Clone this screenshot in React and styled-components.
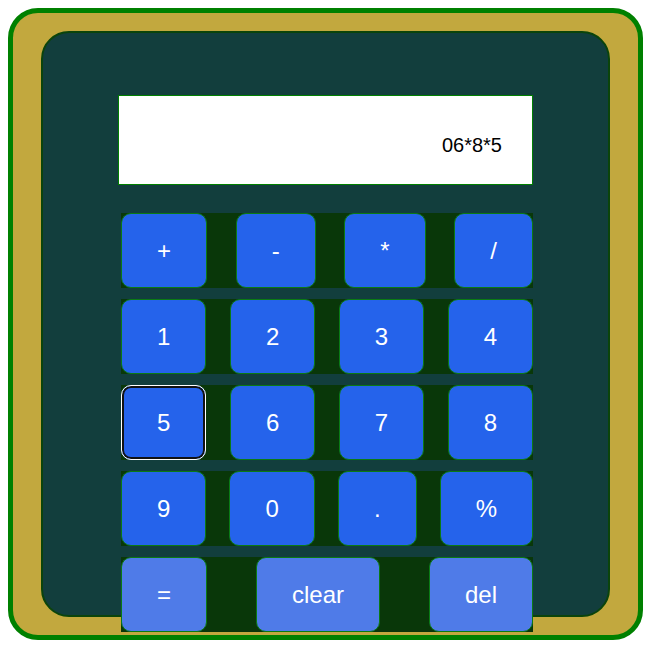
import styled, { createGlobalStyle } from "styled-components";

const GlobalStyle = createGlobalStyle`
  body {
    margin: 8px;
    background: #ffffff;
    font-family: "Liberation Sans", Arial, sans-serif;
  }
`;

const Case = styled.div`
  width: 635px;
  box-sizing: border-box;
  border: 5px solid #008000;
  border-radius: 30px;
  background: #c2a83e;
  padding: 18px 28px;
`;

const Panel = styled.div`
  height: 586px;
  box-sizing: border-box;
  border: 2px solid #0b440b;
  border-radius: 28px;
  background: #123e3d;
  padding-top: 62px;
  display: flex;
  flex-direction: column;
  align-items: center;
`;

const Screen = styled.div`
  flex-shrink: 0;
  width: 415px;
  height: 90px;
  box-sizing: border-box;
  border: 1px solid #008000;
  background: #ffffff;
  padding: 38px 30px 0 0;
  text-align: right;
  font-size: 20px;
  color: #000000;
`;

const Keypad = styled.div`
  flex-shrink: 0;
  width: 412px;
  margin: 28px 0 0 3px;
  display: flex;
  flex-direction: column;
  gap: 11px;
`;

const Row = styled.div`
  display: flex;
  justify-content: space-between;
  background: #093709;
`;

const Key = styled.button`
  height: 75px;
  box-sizing: border-box;
  padding: 0 35px;
  border: 1px solid ${(p) => (p.$focused ? "#ffffff" : "#0a7a14")};
  box-shadow: ${(p) => (p.$focused ? "inset 0 0 0 2px #111111" : "none")};
  border-radius: 10px;
  background: ${(p) => (p.$light ? "#4f7be8" : "#2563eb")};
  color: #ffffff;
  font-family: "Liberation Sans", Arial, sans-serif;
  font-size: 24px;
  cursor: pointer;
  outline: none;
`;

const rows = [
  ["+", "-", "*", "/"],
  ["1", "2", "3", "4"],
  ["5", "6", "7", "8"],
  ["9", "0", ".", "%"],
];

const App = () => {
  return (
    <>
      <GlobalStyle />
      <Case>
        <Panel>
          <Screen>06*8*5</Screen>
          <Keypad>
            {rows.map((row, i) => (
              <Row key={i}>
                {row.map((k) => (
                  <Key key={k} $focused={k === "5"}>
                    {k}
                  </Key>
                ))}
              </Row>
            ))}
            <Row>
              <Key $light>=</Key>
              <Key $light>clear</Key>
              <Key $light>del</Key>
            </Row>
          </Keypad>
        </Panel>
      </Case>
    </>
  );
};

export default App;
